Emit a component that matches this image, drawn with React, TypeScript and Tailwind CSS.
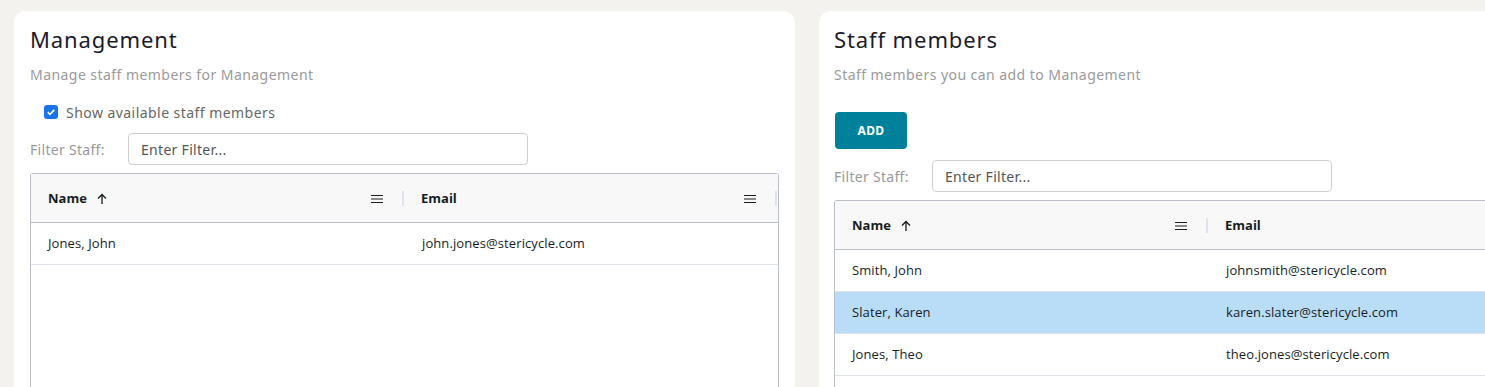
import React from 'react';

type Person = { name: string; email: string };

const members: Person[] = [{ name: 'Jones, John', email: 'john.jones@stericycle.com' }];

const available: Person[] = [
  { name: 'Smith, John', email: 'johnsmith@stericycle.com' },
  { name: 'Slater, Karen', email: 'karen.slater@stericycle.com' },
  { name: 'Jones, Theo', email: 'theo.jones@stericycle.com' },
];

const GRID_FONT = { fontFamily: '"Open Sans", "Noto Sans", sans-serif' };

function MenuIcon() {
  return (
    <svg width="12" height="10" viewBox="0 0 12 10" className="shrink-0">
      <path d="M0 1.5h12M0 5h12M0 8.5h12" stroke="#181d1f" strokeWidth="1.2" />
    </svg>
  );
}

function SortUp() {
  return (
    <svg width="12" height="12" viewBox="0 0 12 12" className="shrink-0">
      <path d="M6 11V1.5M2 5.5l4-4 4 4" stroke="#181d1f" strokeWidth="1.3" fill="none" />
    </svg>
  );
}

function HeaderCell({ label, sorted }: { label: string; sorted?: boolean }) {
  return (
    <div className="flex items-center h-full pl-[17px] pt-[1px]">
      <span className="text-[13px] font-bold text-[#181d1f]">{label}</span>
      {sorted && <span className="ml-[9px] flex"><SortUp /></span>}
      <span className="ml-auto flex"><MenuIcon /></span>
      <span className="ml-[19px] w-[2px] h-[15px] bg-[#dde2eb]" />
    </div>
  );
}

function StaffGrid({ rows, selected }: { rows: Person[]; selected?: number }) {
  return (
    <div className="border border-[#babfc7] border-b-0 rounded-t-[3px] h-[400px] bg-white" style={GRID_FONT}>
      <div className="grid grid-cols-[373px_373px] h-[49px] bg-[#f8f8f8] border-b border-[#babfc7]">
        <HeaderCell label="Name" sorted />
        <HeaderCell label="Email" />
      </div>
      {rows.map((r, i) => (
        <div
          key={r.email}
          className={`grid grid-cols-[373px_373px] h-[42px] border-b border-[#dde2eb] items-center text-[13px] text-[#181d1f] tracking-[0.1px] ${i === selected ? 'bg-[#b9dcf7]' : 'bg-white'}`}
        >
          <div className="pl-[17px]">{r.name}</div>
          <div className="pl-[18px]">{r.email}</div>
        </div>
      ))}
    </div>
  );
}

function FilterRow() {
  return (
    <div className="flex items-center h-[32px]">
      <span className="w-[98px] text-[14px] text-[#999999] tracking-[0.3px]">Filter Staff:</span>
      <div className="w-[400px] h-[32px] border border-[#cfcfcf] rounded-[4px] flex items-center pl-[12px] text-[14px] text-[#555555] tracking-[0.3px]">
        Enter Filter...
      </div>
    </div>
  );
}

function CardHeader({ title, subtitle }: { title: string; subtitle: string }) {
  return (
    <>
      <h2 className="text-[22px] leading-[28px] text-[#1b1b2a] tracking-[0.9px]">{title}</h2>
      <p className="mt-[13px] text-[14px] leading-[18px] text-[#9a9a9a] tracking-[0.45px]">{subtitle}</p>
    </>
  );
}

export default function App() {
  return (
    <div className="h-[387px] overflow-hidden bg-[#f3f2ee] flex gap-[24px] pl-[14px] pt-[11px]" style={{ fontFamily: '"Noto Sans", "Open Sans", sans-serif' }}>
      <div className="w-[781px] shrink-0 h-[500px] bg-white rounded-[12px] pl-[16px] pr-[16px] pt-[14px]">
        <CardHeader title="Management" subtitle="Manage staff members for Management" />
        <label className="mt-[19px] ml-[14px] flex items-center gap-[8px] h-[18px]">
          <span className="w-[14px] h-[14px] rounded-[3px] bg-[#1a73e8] flex items-center justify-center">
            <svg width="10" height="10" viewBox="0 0 10 10">
              <path d="M1.8 5.2l2.2 2.2 4.3-4.6" stroke="#fff" strokeWidth="1.7" fill="none" />
            </svg>
          </span>
          <span className="text-[14px] text-[#666666] tracking-[0.45px]">Show available staff members</span>
        </label>
        <div className="mt-[12px]">
          <FilterRow />
        </div>
        <div className="mt-[8px]">
          <StaffGrid rows={members} />
        </div>
      </div>

      <div className="w-[800px] shrink-0 h-[500px] bg-white rounded-[12px] pl-[15px] pt-[14px]">
        <CardHeader title="Staff members" subtitle="Staff members you can add to Management" />
        <button className="mt-[28px] ml-[1px] w-[72px] h-[37px] rounded-[4px] bg-[#00819b] text-white text-[12px] font-bold tracking-[0.3px]">
          ADD
        </button>
        <div className="mt-[11px]">
          <FilterRow />
        </div>
        <div className="mt-[8px]">
          <StaffGrid rows={available} selected={1} />
        </div>
      </div>
    </div>
  );
}
